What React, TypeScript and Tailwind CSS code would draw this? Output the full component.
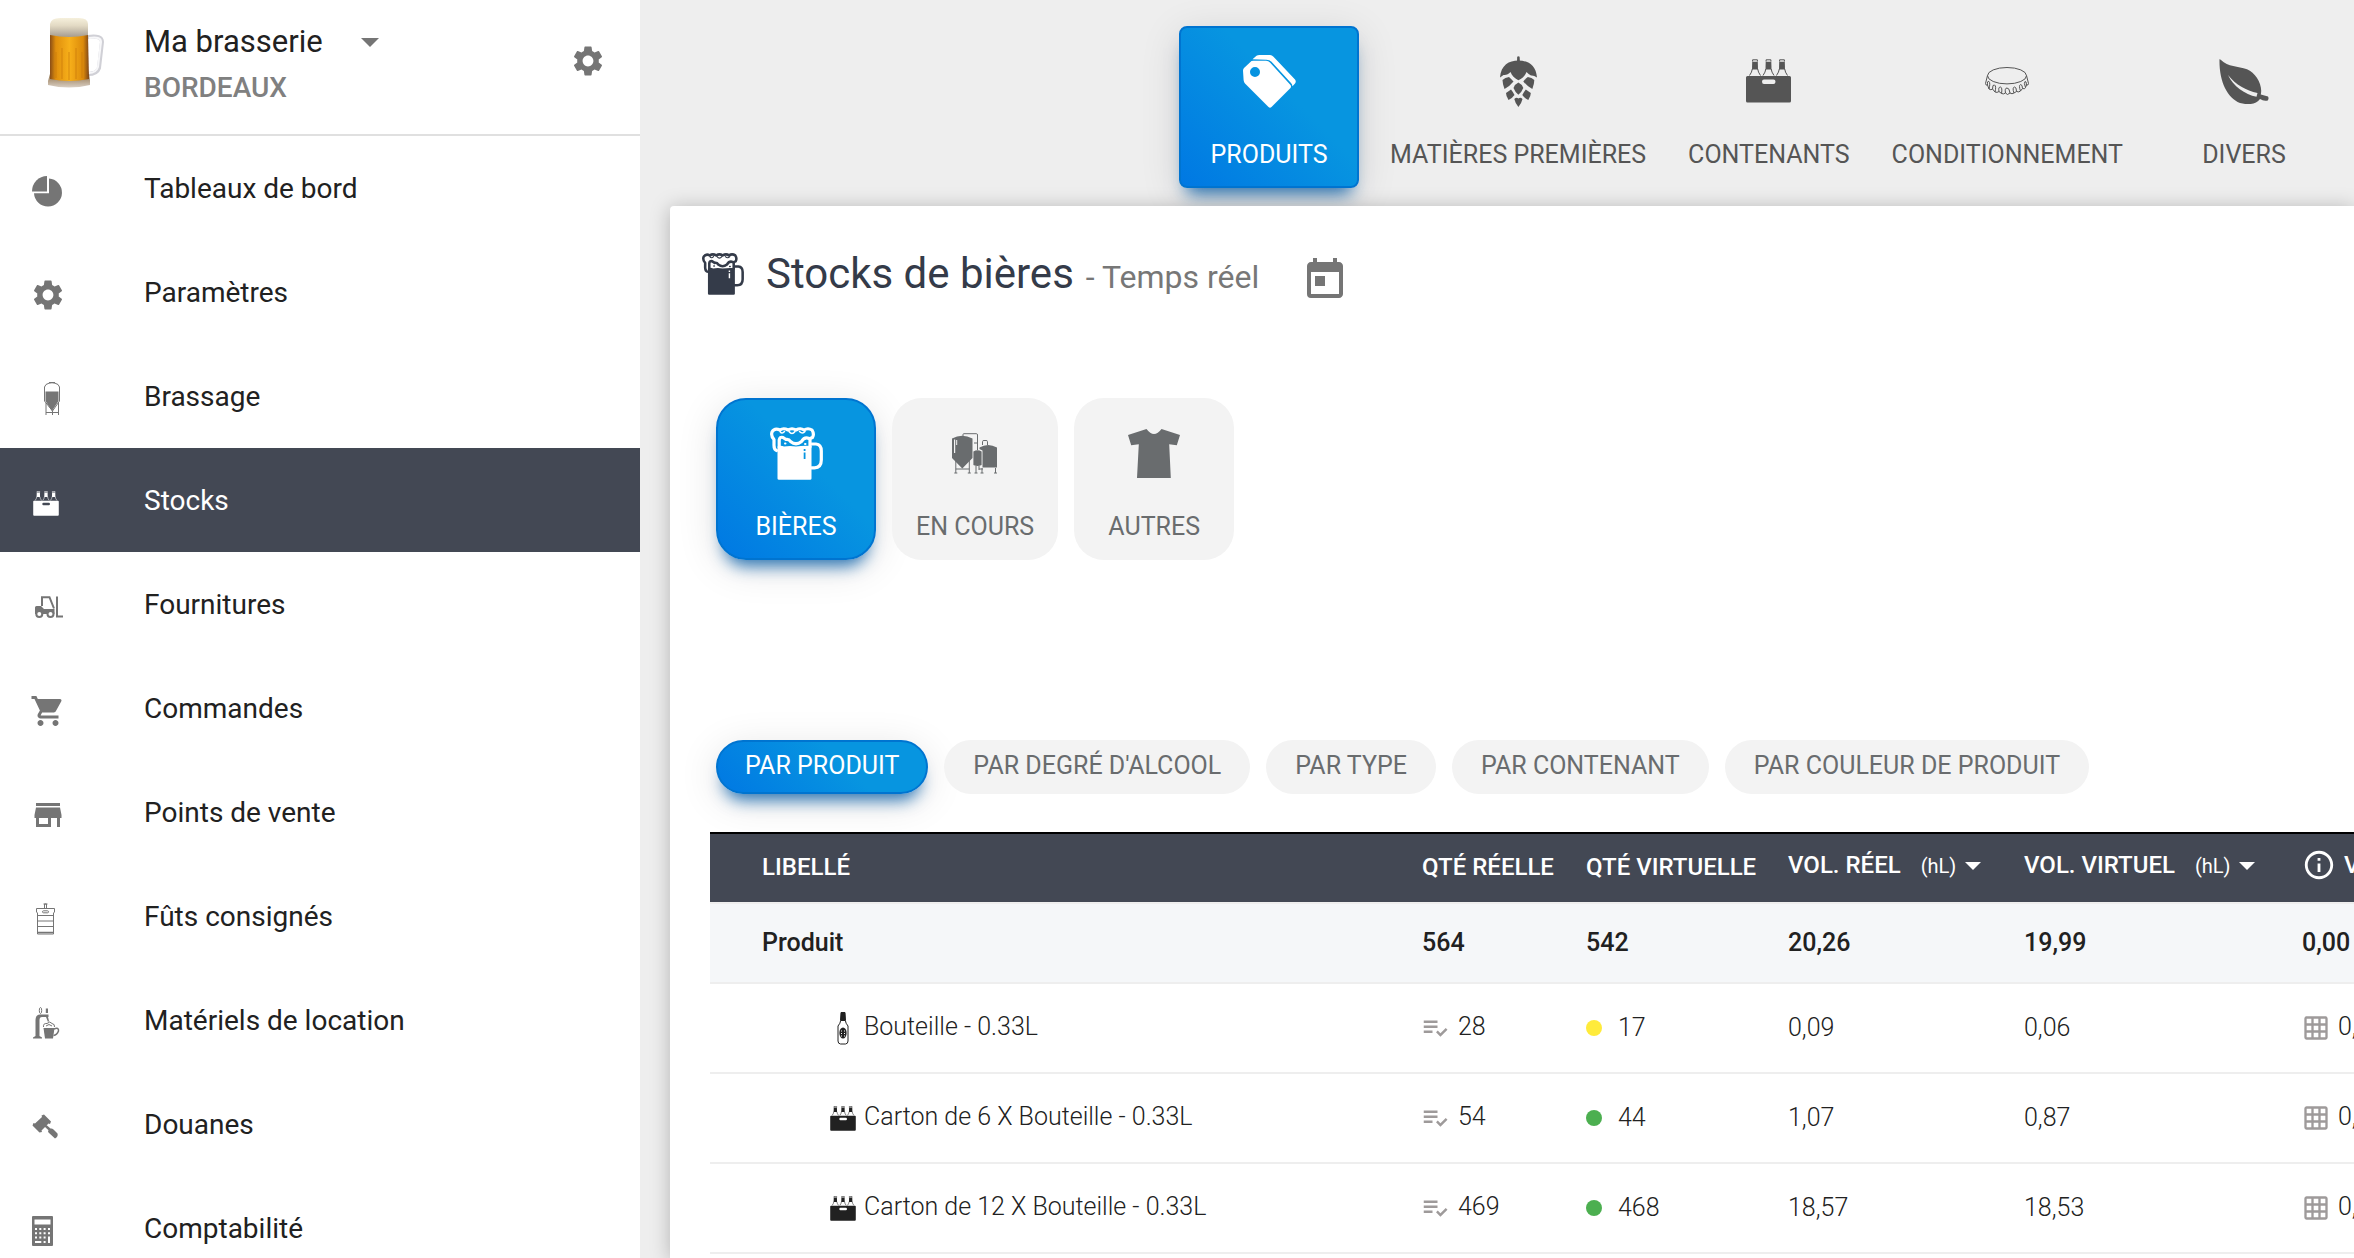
import React, { useState } from 'react'
import { MdSettings, MdShoppingCart, MdStore, MdToday, MdPlaylistAddCheck, MdGridOn, MdInfoOutline } from 'react-icons/md'

function PieIcon() {
  return (
    <svg viewBox="0 0 36 36" className="size-9" fill="currentColor">
      <path d="M2 18.5A15 15.5 0 0 1 17 3V18.5Z" />
      <path d="M19 5.6A14 14 0 1 1 4 20.3H19Z" />
    </svg>
  )
}

function FermenterIcon() {
  return (
    <svg viewBox="0 0 36 36" className="size-9" fill="none" stroke="currentColor">
      <path d="M16 3.5Q22 0 28 3.5L29.5 6V20L22.5 30 14.5 20V6Z" strokeWidth="1" />
      <path d="M19 1.5h6M16 22v12M28.5 22v12M16 31.5h12.5M22.500 30v4" strokeWidth="1" />
      <path d="M15.500 10.500H28.500V20L22 30 15.500 20Z" fill="currentColor" stroke="none" />
    </svg>
  )
}

function Crate({ className }: { className: string }) {
  return (
    <svg viewBox="0 0 45 44" className={className} fill="currentColor">
      <path
        fillRule="evenodd"
        d="M1.500 17h42q1.500 0 1.500 1.500v23.500q0 1.500-1.500 1.500h-42q-1.500 0-1.500-1.500v-23.500q0-1.500 1.500-1.500zM18 20.500q-2 0-2 2.300t2 2.300h9.500q2 0 2-2.300t-2-2.300z"
      />
      {[9, 22.5, 36].map((x) => (
        <g key={x} transform={`translate(${x} 0)`}>
          <path d="M-2.800 2.700H2.800L3 10.500H-3Z" />
          <path d="M-2.400 2.500V.8H2.400V2.500M-2.700 10Q-3 13-5.500 16.500M2.700 10Q3 13 5.500 16.500" fill="none" stroke="currentColor" strokeWidth="1" />
        </g>
      ))}
    </svg>
  )
}

function CrateIcon() {
  return (
    <span className="flex size-9 items-center pl-[3px]">
      <Crate className="h-[25px] w-[26px]" />
    </span>
  )
}

function ForkliftIcon() {
  return (
    <svg viewBox="0 0 36 36" className="size-9" fill="none" stroke="currentColor">
      <path d="M12 17V8.200H19.500L24 19.500" strokeWidth="2" />
      <path d="M27 7.500V27.500H33" strokeWidth="2" />
      <path d="M5 18.500Q5 17 6.500 17H11L14 20H24.500V25H5Z" fill="currentColor" stroke="none" />
      <circle cx="9.300" cy="25" r="3" fill="white" strokeWidth="2" />
      <circle cx="20.500" cy="25" r="3" fill="white" strokeWidth="2" />
    </svg>
  )
}

function KegIcon() {
  return (
    <svg viewBox="0 0 36 36" className="size-9" fill="none" stroke="currentColor">
      <path d="M6.500 7.500V11L7.500 12V33H23.500V12L24.500 11V7.500Z" strokeWidth="1" />
      <path d="M14.500 7V3h2v4M13.500 3h4" strokeWidth="1" />
      <rect x="12.500" y="9.800" width="6" height="2" rx="1" strokeWidth="1" />
      <path d="M7 14.500h17M7 20h17M7 25.500h17" strokeWidth="1" />
      <path d="M7 31.500h17" strokeWidth="1.500" />
    </svg>
  )
}

function TapIcon() {
  return (
    <svg viewBox="0 0 36 36" className="size-9" fill="currentColor">
      <path d="M3 33.500V32.500L5.500 31V15Q5.500 10 10 9.500H18.500V12H12Q9.500 12.200 9.500 15V31L12 32.500V33.500Z" />
      <path d="M15.800 3.500h2.200V8h-2.200zM16 12h2l1 4-1 1z" />
      <ellipse cx="10.500" cy="5.500" rx="1.200" ry="3" fill="none" stroke="currentColor" />
      <path d="M13.500 23H24.500L23 33.500H15Z" />
      <path d="M13.500 22Q13 18 17 18.500 20 15.500 22 18.500 25 19 24.500 22M16 21q3-3 6 0" fill="none" stroke="currentColor" />
      <path d="M24 24Q29 22 28.500 26 27 30 23.500 30.500" fill="none" stroke="currentColor" strokeWidth="1.500" />
    </svg>
  )
}

function GavelIcon() {
  return (
    <svg viewBox="0 0 36 36" className="size-9" fill="currentColor">
      <path d="M11.500 6.500L14 5.500 21 12.500 20 15 18.500 14.500 11.500 21.500 12 23 9.500 23.500 2.500 16.500 3.500 14 5 14.500 12 8Z" />
      <path d="M14.500 17.500L16.500 16 20.500 19.500Q22 19 23.500 20.500L27.500 24.500Q28.500 27.500 25 29.500L18.500 23.500Q17.500 22 18.500 21.200Z" />
    </svg>
  )
}

function CalculatorIcon() {
  return (
    <svg viewBox="0 0 36 36" className="size-9">
      <rect x="2" y="3" width="21" height="30" rx="1" fill="currentColor" />
      <path
        d="M4.500 6.500h16v5h-16zM5 15h2v2h-2zM9.300 15h2v2h-2zM13.600 15h2v2h-2zM18 15h2v2h-2zM5 19.300h2v2h-2zM9.300 19.300h2v2h-2zM13.600 19.300h2v2h-2zM18 19.300h2v2h-2zM5 23.600h2v2h-2zM9.300 23.600h2v2h-2zM13.600 23.600h2v2h-2zM18 23.600h2v6.400h-2zM5 28h6.300v2h-6.300zM13.600 28h2v2h-2z"
        fill="white"
      />
    </svg>
  )
}

function TagsIcon() {
  return (
    <svg viewBox="0 0 53 53" className="size-[53px]" fill="currentColor">
      <path d="M9.500 4.300L13.500.8Q14.500 0 16.500 0H27Q29 .2 30.500 1.800L52 24.500Q53.500 26.500 52 28.500L49.500 31.200Q49.300 29.300 48 28L28.500 6.800Q26.500 4.800 23.500 4.700Z" />
      <path
        fillRule="evenodd"
        d="M8.500 6Q9.500 5.600 11 5.700H23Q25.500 5.800 27 7.500L47.500 30Q48.500 31.500 47.500 33L28.500 52Q27 53.500 25.500 52L2 28.500Q.8 27 .6 25L0 15.500Q0 14 1 13ZM12 12A5 5 0 1 0 12 22A5 5 0 1 0 12 12Z"
      />
    </svg>
  )
}

function HopIcon() {
  return (
    <svg viewBox="0 0 37 51" className="h-[51px] w-[37px]" fill="currentColor">
      <path d="M17 5.500L17.200.8Q18.400-.5 19.600.8L19.900 5.500Z" />
      <path d="M0 21.500C1 9 9 4.500 18.400 4.500S36 9 37 21.500Q33.500 19 31 19.500 28.500 18 26.500 16C25 20 22 22.500 18.400 24.300 15 22.500 12 20 10.500 16 8.500 18 6 19.500 3.500 19 0 21.500Z" />
      <path d="M2.500 24Q5 21.500 9 21 11 22.500 13.500 25.500 10 30 4.500 33 2.500 28 2.500 24Z" />
      <path d="M34.300 24Q31.800 21.500 27.800 21 25.800 22.500 23.300 25.500 26.800 30 32.300 33 34.300 28 34.300 24Z" />
      <path d="M18.400 26.500Q15 28 13.500 32 15 36 18.400 38.700 21.800 36 23.300 32 21.800 28 18.400 26.500Z" />
      <path d="M6 37Q8.500 35 11 33.500 13 36 14.500 39 12 42.500 8.500 44 6 40 6 37Z" />
      <path d="M30.800 37Q28.300 35 25.800 33.500 23.800 36 22.300 39 24.800 42.500 28.300 44 30.800 40 30.800 37Z" />
      <path d="M14.300 43Q16.500 41 18.400 42.500 20.500 41 22.500 43 21.500 47.500 18.400 51 15.300 47.500 14.300 43Z" />
    </svg>
  )
}

function CapIcon() {
  return (
    <svg viewBox="0 0 44 28" className="h-7 w-11" fill="none" stroke="currentColor" strokeWidth="1">
      <ellipse cx="22" cy="8.700" rx="19.500" ry="8.200" />
      <path d="M2.500 8.500L.5 16.500Q1 19 2.500 18L4 22Q6 23.500 7.500 22L10 25Q12 26 14 24.500L16.500 26.500Q18.500 27.500 20.500 26L22.500 27.500 25 26Q27 27.500 29 26L31.500 24.500Q34 25.500 35.500 24L37.500 21.500Q40 22.500 40.500 20.500L41.500 18Q43.500 18.500 43.500 16.500L41.500 8.500" />
      <path d="M2.500 18Q2 13.500 4 14.500 5.500 16 4 22M7.500 22Q7.500 17 9.500 18 11.500 19 10 25M14 24.500Q13 20 15.500 20 17.500 20.500 16.500 26.500M20.500 26Q19.500 21 22 21 24.500 21 25 26M29 26Q27 20.500 29.500 20 31.500 20 31.500 24.500M35.500 24Q33.500 18.500 35.500 17.500 37.500 17.500 37.500 21.500M40.500 20.500Q38.500 15.500 40 14.500 41.500 14 41.500 18" />
    </svg>
  )
}

function LeafIcon() {
  return (
    <svg viewBox="0 0 50 45" className="h-[45px] w-[50px]" fill="currentColor">
      <path
        fillRule="evenodd"
        d="M.5.3Q1 0 2 1C9 8 19 7 28 10.300 37 14 44 26 41.800 35.500L49 37.500Q50.200 39.500 48.800 41.500 44.500 42.500 41 40C37 45.500 29 46.200 21 44C8 38.500 0 22 .5.300ZM9 16C14 27 26 35.500 37.500 37.800L38.500 34C27 31.500 17 26 9 16Z"
      />
    </svg>
  )
}

function BeerMug({ className }: { className: string }) {
  return (
    <svg viewBox="0 0 53 53" className={className} fill="none" stroke="currentColor" strokeWidth="3.200" strokeLinejoin="round" strokeLinecap="round">
      <path
        fillRule="evenodd"
        d="M7.500 19.500Q11 18 14 19.500 20 18.500 26 19.500 33 18.500 41.500 19V51.500Q41.500 52.700 40 52.700H9Q7.500 52.700 7.500 51.500ZM33.700 22V24H35.500V22ZM33.700 25.500V32H35.500V25.500Z"
        fill="currentColor"
        stroke="none"
      />
      <path d="M6.500 23.500Q3.700 22.500 4 17V12.500Q.7 9 2 5 4.500.5 10 3 13.500.5 18 3 22 .5 26 3 30.500.5 34 3 38 .5 42 3 44.500 7 42.500 10.500L40 11.500" />
      <path d="M9.200 20V13Q9.700 9.500 13 10.500L16 12.500Q19 12 20.500 14.500 26 19 31.500 14.500 34.500 9.500 39 11.500L40 12.500V20" />
      <path d="M10 4.500q2 3 4.500 0M19 4.500q3 4 6 0M29.500 4.500q3 3 5.500 0" strokeWidth="1.500" />
      <path d="M15 16.500h.5M35 17h.5" strokeWidth="2" />
      <path d="M41.500 17H46Q51.300 17.500 51.300 24V33Q51.300 40.500 44.500 40.800H41.500" />
    </svg>
  )
}

function TanksIcon() {
  return (
    <svg viewBox="0 0 46 41" className="h-[41px] w-[46px]" fill="currentColor">
      <path fillRule="evenodd" d="M0 5.500Q10 0 20.500 5.500V25L10.300 35.500 0 25ZM2 6.500V20h1.200V6.500ZM4.200 7V12h1V7Z" />
      <path d="M3.800 27v13M17.300 27v13M3.800 36h13.500M2.300 40h3M15.800 40h3M11 3V1.500Q11 .7 12 .7H24.500Q25.500 .7 25.500 2V17M22 10h3M30.500 12V8.500Q30.500 7.500 32 7.500H34Q35.500 7.500 35.500 8.500V12M30 35v5M43.500 35v5M28.500 40h3M42 40h3M24 33v7M27 33v4M22.500 40h3M27 36H31" fill="none" stroke="currentColor" strokeWidth="1" />
      <path d="M21.400 18.500Q25.500 16 29.600 18.500V32Q25.500 34 21.400 32Z" />
      <path d="M27.500 14.500Q36 9.500 45 14.500V34.500H30.500V17.500L27.500 16Z" />
    </svg>
  )
}

function ShirtIcon() {
  return (
    <svg viewBox="0 0 52 49" className="h-[49px] w-[52px]" fill="currentColor">
      <path d="M18.500 0Q26 10 33.500 0L52 6 48.800 16.200 41.200 15.200 42.800 49H9L10.800 15.200 3.200 16.200 0 6Z" />
    </svg>
  )
}

function BottleIcon() {
  return (
    <svg viewBox="0 0 26 34" className="h-[34px] w-[26px]" fill="none" stroke="currentColor">
      <path d="M11 1.500h4l.5 8h-5z" fill="currentColor" strokeWidth="1" />
      <path d="M10.500 10Q10.500 12 8 15V30Q8 32.800 10.500 33H15.500Q18 32.800 18 30V15Q15.500 12 15.500 10" strokeWidth="1" />
      <ellipse cx="13" cy="22" rx="3.600" ry="5.500" fill="currentColor" stroke="none" />
      <path d="M11.500 19.500v1M14.500 19.500v1M11.500 22v1M14.500 22v1M11.500 24.500v1M14.500 24.500v1" stroke="white" strokeWidth="1" />
    </svg>
  )
}

function BeerLogo() {
  return (
    <svg viewBox="0 0 72 76" className="h-[76px] w-[72px]">
      <defs>
        <linearGradient id="beer">
          <stop offset="0" stopColor="#8a4d16" />
          <stop offset=".15" stopColor="#e08f0d" />
          <stop offset=".5" stopColor="#f7b01a" />
          <stop offset=".85" stopColor="#dc8a0a" />
          <stop offset="1" stopColor="#7d4517" />
        </linearGradient>
        <linearGradient id="foam" x2="0" y2="1">
          <stop offset="0" stopColor="#f6f0dc" />
          <stop offset=".4" stopColor="#e3dac4" />
          <stop offset="1" stopColor="#a59c90" />
        </linearGradient>
        <linearGradient id="glass" x2="0" y2="1">
          <stop offset="0" stopColor="#8f7048" />
          <stop offset="1" stopColor="#d9cfc4" />
        </linearGradient>
      </defs>
      <path d="M52 23Q66 21 66 28L63 54Q61 60 52 60" fill="none" stroke="#d0d0d6" strokeWidth="4" />
      <path d="M53 24Q65 22 65 28L62 53Q60 59 53 59" fill="none" stroke="#f7f7f9" strokeWidth="2" />
      <path d="M12 67L14 60H53L54 66V71Q33 76 12 71Z" fill="url(#glass)" />
      <path d="M14 20H52L53 65Q33 69 14 65Z" fill="url(#beer)" />
      <path d="M20 38v26M26 34v31M33 38v28M40 34v31M46 38v26" stroke="#c9780a" strokeWidth="2" opacity=".35" />
      <path d="M14 10Q15 4 24 4H43Q52 4 52 10V21Q33 25 14 21Z" fill="url(#foam)" />
    </svg>
  )
}

const MENU = [
  { label: 'Tableaux de bord', icon: <PieIcon /> },
  { label: 'Paramètres', icon: <MdSettings className="size-9" /> },
  { label: 'Brassage', icon: <FermenterIcon /> },
  { label: 'Stocks', icon: <CrateIcon />, active: true },
  { label: 'Fournitures', icon: <ForkliftIcon /> },
  { label: 'Commandes', icon: <MdShoppingCart className="size-9" /> },
  { label: 'Points de vente', icon: <MdStore className="size-9" /> },
  { label: 'Fûts consignés', icon: <KegIcon /> },
  { label: 'Matériels de location', icon: <TapIcon /> },
  { label: 'Douanes', icon: <GavelIcon /> },
  { label: 'Comptabilité', icon: <CalculatorIcon /> },
]

const TABS = [
  { label: 'PRODUITS', icon: <TagsIcon /> },
  { label: 'MATIÈRES PREMIÈRES', icon: <HopIcon /> },
  { label: 'CONTENANTS', icon: <Crate className="h-11 w-[45px]" /> },
  { label: 'CONDITIONNEMENT', icon: <CapIcon /> },
  { label: 'DIVERS', icon: <LeafIcon /> },
]

const CATEGORIES = [
  { label: 'BIÈRES', icon: <BeerMug className="size-[53px]" /> },
  { label: 'EN COURS', icon: <TanksIcon /> },
  { label: 'AUTRES', icon: <ShirtIcon /> },
]

const FILTERS = ['PAR PRODUIT', "PAR DEGRÉ D'ALCOOL", 'PAR TYPE', 'PAR CONTENANT', 'PAR COULEUR DE PRODUIT']

const ROWS = [
  { label: 'Bouteille - 0.33L', icon: <BottleIcon />, real: '28', virtual: '17', dot: 'bg-[#ffeb3b]', volReal: '0,09', volVirtual: '0,06' },
  { label: 'Carton de 6 X Bouteille - 0.33L', icon: <Crate className="h-[25px] w-[26px]" />, real: '54', virtual: '44', dot: 'bg-[#4caf50]', volReal: '1,07', volVirtual: '0,87' },
  { label: 'Carton de 12 X Bouteille - 0.33L', icon: <Crate className="h-[25px] w-[26px]" />, real: '469', virtual: '468', dot: 'bg-[#4caf50]', volReal: '18,57', volVirtual: '18,53' },
]

const ACTIVE =
  'border-[#0074d0] bg-[linear-gradient(45deg,#0078e3,#0795e0_60%)] text-white shadow-[0_8px_40px_rgba(0,0,0,0.12),0_14px_16px_-8px_rgba(0,98,180,0.8)]'

function Caret({ className }: { className: string }) {
  return (
    <svg viewBox="0 0 18 9" className={className} fill="currentColor">
      <path d="M0 0H18L9 9Z" />
    </svg>
  )
}

function UnitSelect({ name }: { name: string }) {
  return (
    <span className="flex items-center">
      <select aria-label={name} className="appearance-none bg-transparent text-xl leading-6 font-normal">
        <option>(hL)</option>
      </select>
      <Caret className="ml-2 h-2 w-4" />
    </span>
  )
}

function Sidebar() {
  return (
    <aside className="w-[640px] shrink-0 bg-white text-[#212121]">
      <div className="flex h-[136px] items-start border-b-2 border-[#e0e0e0] pl-9">
        <div className="w-[108px] pt-3.5">
          <BeerLogo />
        </div>
        <div className="flex-1 pt-6">
          <div className="flex items-center">
            <select aria-label="Brasserie" className="appearance-none bg-transparent text-[31px] leading-9">
              <option>Ma brasserie</option>
            </select>
            <Caret className="ml-[38px] h-[9px] w-[18px] text-[#757575]" />
          </div>
          <p className="mt-3 text-[28px] leading-8 font-medium text-[#808080]">BORDEAUX</p>
        </div>
        <button aria-label="Réglages" className="mt-[43px] mr-[34px] text-[#757575]">
          <MdSettings className="size-9" />
        </button>
      </div>
      <nav>
        {MENU.map((item) => (
          <a
            key={item.label}
            href="#"
            className={`flex h-[104px] items-center pt-0.5 pl-[30px] text-[28px] ${item.active ? 'bg-[#434854] text-white' : ''}`}
          >
            <span className={`mt-1 w-[114px] ${item.active ? '' : 'text-[#757575]'}`}>{item.icon}</span>
            {item.label}
          </a>
        ))}
      </nav>
    </aside>
  )
}

function StockTable() {
  return (
    <table className="w-[calc(100%+160px)] table-fixed border-collapse text-left text-[25px]">
      <colgroup>
        <col />
        <col className="w-[164px]" />
        <col className="w-[202px]" />
        <col className="w-[236px]" />
        <col className="w-[280px]" />
        <col className="w-[226px]" />
      </colgroup>
      <thead>
        <tr className="h-[70px] border-t-2 border-b-2 border-t-black border-b-[#eeeeee] bg-[#434854] text-2xl whitespace-nowrap text-white">
          <th className="pb-0.5 pl-[52px] font-medium">LIBELLÉ</th>
          <th className="pb-0.5 pl-4 font-medium">QTÉ RÉELLE</th>
          <th className="pb-0.5 pl-4 font-medium">QTÉ VIRTUELLE</th>
          <th className="pb-1.5 pl-4 font-medium">
            <div className="flex items-baseline gap-5">
              VOL. RÉEL <UnitSelect name="Unité du volume réel" />
            </div>
          </th>
          <th className="pb-1.5 pl-4 font-medium">
            <div className="flex items-baseline gap-5">
              VOL. VIRTUEL <UnitSelect name="Unité du volume virtuel" />
            </div>
          </th>
          <th className="pb-1.5 pl-3.5 font-medium">
            <div className="flex items-center gap-2">
              <MdInfoOutline className="size-[34px]" /> VOL.
            </div>
          </th>
        </tr>
      </thead>
      <tbody className="text-[#212121]">
        <tr className="h-20 border-b-2 border-[#eeeeee] bg-[#f5f7f9] font-medium">
          <td className="pl-[52px]">Produit</td>
          <td className="pl-4">564</td>
          <td className="pl-4">542</td>
          <td className="pl-4">20,26</td>
          <td className="pl-4">19,99</td>
          <td className="pl-3.5">0,00</td>
        </tr>
        {ROWS.map((row) => (
          <tr key={row.label} className="h-[90px] border-b-2 border-[#eeeeee] font-light">
            <td className="pl-[120px]">
              <div className="flex items-center gap-2">
                {row.icon}
                <span className="pb-0.5">{row.label}</span>
              </div>
            </td>
            <td className="pl-3.5">
              <div className="flex items-center gap-2">
                <MdPlaylistAddCheck className="size-[30px] text-[#9e9a9a]" />
                <span className="pb-0.5">{row.real}</span>
              </div>
            </td>
            <td className="pl-4">
              <div className="flex items-center gap-4">
                <span className={`size-4 rounded-full ${row.dot}`} />
                {row.virtual}
              </div>
            </td>
            <td className="pl-4">{row.volReal}</td>
            <td className="pl-4">{row.volVirtual}</td>
            <td className="pl-3.5">
              <div className="flex items-center gap-2">
                <MdGridOn className="size-7 text-[#9e9a9a]" />
                <span className="pb-0.5">0,00</span>
              </div>
            </td>
          </tr>
        ))}
      </tbody>
    </table>
  )
}

export default function App() {
  const [tab, setTab] = useState('PRODUITS')
  const [category, setCategory] = useState('BIÈRES')
  const [filter, setFilter] = useState('PAR PRODUIT')

  return (
    <div className="flex h-screen overflow-hidden bg-[#eeeeee] font-[Roboto,sans-serif]">
      <Sidebar />
      <main className="flex min-w-0 flex-1 flex-col pl-[30px]">
        <div className="flex justify-end gap-5 pt-[26px] pr-5 pb-[18px]">
          {TABS.map(({ label, icon }) => (
            <button
              key={label}
              onClick={() => setTab(label)}
              className={`flex h-[162px] min-w-[180px] flex-col items-center rounded-lg border-2 px-[9px] text-[25px] ${
                tab === label ? ACTIVE : 'border-transparent text-[#555555]'
              }`}
            >
              <span className="mb-0.5 flex h-[106px] items-center">{icon}</span>
              {label}
            </button>
          ))}
        </div>

        <section className="flex-1 rounded-tl bg-white pl-10 shadow-[0_2px_20px_rgba(0,0,0,0.25)]">
          <div className="-ml-2 flex items-center gap-[22px] pt-9">
            <BeerMug className="size-[42px] shrink-0 text-[#343b49]" />
            <h1 className="flex items-baseline gap-3 text-[42px] text-[#343b49]">
              Stocks de bières
              <span className="text-[32px] text-[#777777]">- Temps réel</span>
            </h1>
            <button aria-label="Choisir une date" className="mt-3 ml-5 text-[#757575]">
              <MdToday className="size-12" />
            </button>
          </div>

          <div className="mt-[93px] flex gap-4 pl-1.5">
            {CATEGORIES.map(({ label, icon }) => (
              <button
                key={label}
                onClick={() => setCategory(label)}
                className={`flex h-[162px] min-w-[160px] flex-col items-center rounded-[30px] border-2 px-[22px] text-[25px] ${
                  category === label ? ACTIVE : 'border-transparent bg-[#f3f3f3] text-[#696c6e]'
                }`}
              >
                <span className="mb-0.5 flex h-[106px] items-center">{icon}</span>
                {label}
              </button>
            ))}
          </div>

          <div className="mt-[180px] flex gap-4 pl-1.5">
            {FILTERS.map((label) => (
              <button
                key={label}
                onClick={() => setFilter(label)}
                className={`h-[54px] rounded-full border-2 px-[27px] pb-0.5 text-[25px] ${
                  filter === label ? ACTIVE : 'border-transparent bg-[#f3f3f3] text-[#696c6e]'
                }`}
              >
                {label}
              </button>
            ))}
          </div>

          <div className="mt-[38px]">
            <StockTable />
          </div>
        </section>
      </main>
    </div>
  )
}
